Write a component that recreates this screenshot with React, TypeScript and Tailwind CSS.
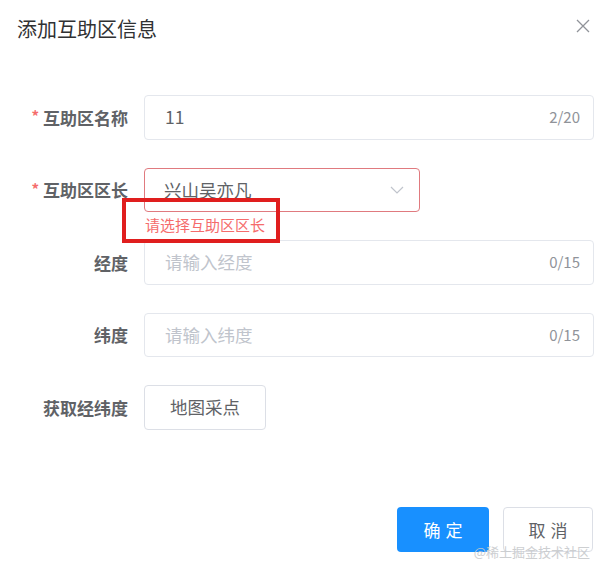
const font = { fontFamily: '"Noto Sans CJK SC", "Noto Sans", sans-serif' };

const Label = ({ text, required }: { text: string; required?: boolean }) => (
  <div className="w-[144px] h-[44.5px] shrink-0 flex items-center justify-end pr-[16px] text-[17px] font-bold text-[#606266]">
    {required && <span className="text-[#f56c6c] text-[15px] mr-[4px] mt-[-2px]">*</span>}
    {text}
  </div>
);

const TextInput = ({ value, placeholder, count }: { value?: string; placeholder?: string; count: string }) => (
  <div className="flex-1 h-[44.5px] border border-[#e4e7ed] rounded-[4px] flex items-center pl-[20px] pr-[13px]">
    <span className={value ? 'flex-1 text-[17.5px] text-[#606266]' : 'flex-1 text-[17.5px] text-[#c0c4cc]'}>
      {value || placeholder}
    </span>
    <span className="text-[15px] text-[#909399]">{count}</span>
  </div>
);

export default function App() {
  return (
    <div className="w-[606px] h-[572px] bg-white relative flex flex-col overflow-hidden" style={font}>
      {/* Header */}
      <div className="flex items-center justify-between pl-[17px] pr-[16px] pt-[16px]">
        <h2 className="text-[20px] leading-[26px] text-[#303133]">添加互助区信息</h2>
        <svg width="14" height="14" viewBox="0 0 14 14" className="mt-[-6px]">
          <path d="M1 1 L13 13 M13 1 L1 13" stroke="#909399" strokeWidth="1.3" fill="none" />
        </svg>
      </div>

      {/* Form */}
      <div className="mt-[53px] pr-[12px] flex flex-col gap-[28px]">
        <div className="flex items-start">
          <Label text="互助区名称" required />
          <TextInput value="11" count="2/20" />
        </div>

        <div className="flex items-start">
          <Label text="互助区区长" required />
          <div className="relative">
            <div className="w-[276px] h-[44.5px] border border-[#e07a7f] rounded-[4px] flex items-center pl-[19px] pr-[15px]">
              <span className="flex-1 text-[17.5px] text-[#606266]">兴山吴亦凡</span>
              <svg width="14" height="8" viewBox="0 0 14 8">
                <path d="M1 1 L7 7 L13 1" stroke="#c0c4cc" strokeWidth="1.2" fill="none" />
              </svg>
            </div>
            <div className="absolute left-[1px] top-full mt-[2px] text-[15px] leading-[22px] text-[#f56c6c] whitespace-nowrap">
              请选择互助区区长
            </div>
          </div>
        </div>

        <div className="flex items-start">
          <Label text="经度" />
          <TextInput placeholder="请输入经度" count="0/15" />
        </div>

        <div className="flex items-start">
          <Label text="纬度" />
          <TextInput placeholder="请输入纬度" count="0/15" />
        </div>

        <div className="flex items-start">
          <Label text="获取经纬度" />
          <button className="w-[122px] h-[44.5px] border border-[#dcdfe6] rounded-[4px] text-[17.5px] text-[#606266] bg-white">
            地图采点
          </button>
        </div>
      </div>

      {/* Footer */}
      <div className="mt-auto flex justify-end gap-[14px] pr-[13px] pb-[20px]">
        <button className="w-[92px] h-[45px] rounded-[4px] bg-[#1890ff] text-white text-[17px] tracking-[0.3em] pl-[0.3em]">
          确定
        </button>
        <button className="w-[90px] h-[45px] rounded-[4px] border border-[#dcdfe6] bg-white text-[#606266] text-[17px] tracking-[0.3em] pl-[0.3em]">
          取消
        </button>
      </div>

      {/* Annotation box */}
      <div className="absolute left-[122px] top-[198px] w-[158px] h-[45px] border-[4px] border-[#e01e1e]" />

      {/* Watermark */}
      <div className="absolute right-[16px] bottom-[12px] text-[13px] leading-[16px] text-[#c8cacd] opacity-90">
        @稀土掘金技术社区
      </div>
    </div>
  );
}
